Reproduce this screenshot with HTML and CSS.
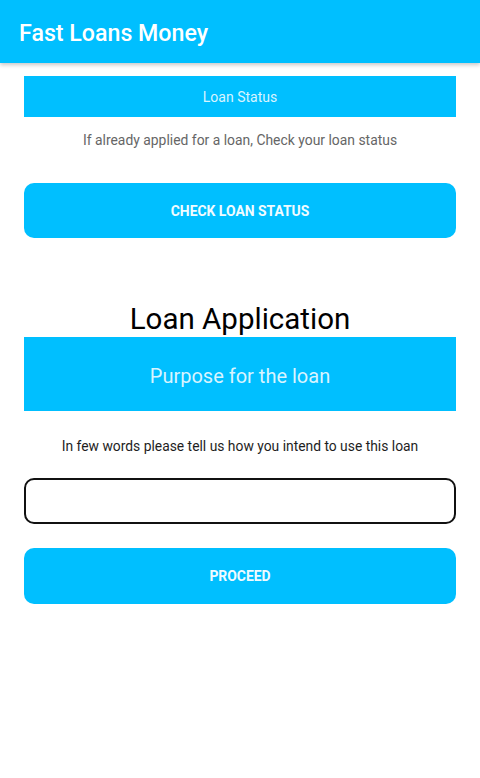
FILE: index.html
```html
<!DOCTYPE html>
<html>
<head>
<meta charset="utf-8">
<link rel="stylesheet" href="styles.css">
</head>
<body>
<header class="appbar"><h1 class="title">Fast Loans Money</h1></header>
<main class="content">
  <div class="banner small">Loan Status</div>
  <p class="hint grey">If already applied for a loan, Check your loan status</p>
  <button class="btn check">CHECK LOAN STATUS</button>
  <h2 class="section">Loan Application</h2>
  <div class="banner large">Purpose for the loan</div>
  <p class="hint dark">In few words please tell us how you intend to use this loan</p>
  <div class="field"></div>
  <button class="btn proceed">PROCEED</button>
</main>
</body>
</html>
```
FILE: styles.css
```css
* { box-sizing: border-box; }
html, body { margin: 0; padding: 0; background: #fff; }
body { width: 480px; height: 778px; font-family: Roboto, "Noto Sans", sans-serif; overflow: hidden; }
.appbar {
  height: 63px;
  background: #00bfff;
  display: flex;
  align-items: center;
  padding-left: 19px;
  box-shadow: 0 2px 4px rgba(0,0,0,0.22);
  position: relative;
}
.title { margin: 0; color: #fff; font-size: 23.2px; font-weight: 500; padding-top: 3px; }
.content { padding: 13px 24px 0; display: flex; flex-direction: column; }
.banner {
  background: #00bfff;
  color: #d8f4ff;
  display: flex; align-items: center; justify-content: center;
}
.banner.small { height: 41px; font-size: 14px; padding-top: 1px; }
.banner.large { height: 74px; font-size: 20px; padding-top: 3px; }
.hint { margin: 0; text-align: center; font-size: 14px; }
.hint.grey { color: #666; margin-top: 14px; line-height: 18px; font-size: 13.9px; }
.hint.dark { color: #1e1e1e; margin-top: 26px; line-height: 18px; font-size: 13.85px; }
.btn {
  border: none; background: #00bfff; color: #f0fbff;
  border-radius: 10px; font-family: Roboto, sans-serif; font-weight: 700; font-size: 13.9px;
  width: 100%; padding: 0;
}
.btn.check { height: 55px; margin-top: 34px; }
.section { margin: 64px 0 0; font-size: 29.5px; font-weight: 400; color: #000; text-align: center; line-height: 34px; height: 35px; }
.field { height: 46px; border: 2px solid #111; border-radius: 10px; margin-top: 23px; }
.btn.proceed { height: 56px; margin-top: 24px; }
```
